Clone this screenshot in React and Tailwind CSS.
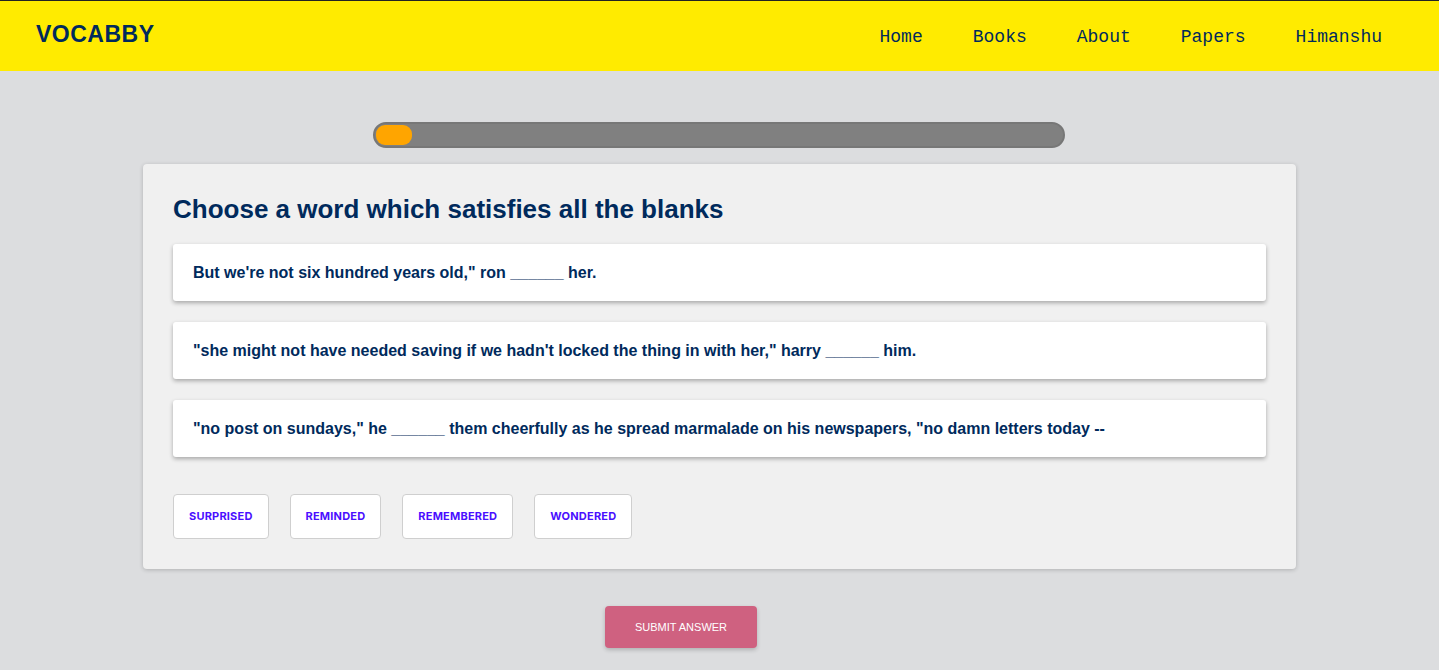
const sentences = [
  `But we're not six hundred years old," ron ______ her.`,
  `"she might not have needed saving if we hadn't locked the thing in with her," harry ______ him.`,
  `"no post on sundays," he ______ them cheerfully as he spread marmalade on his newspapers, "no damn letters today --`
];

const options = ["SURPRISED", "REMINDED", "REMEMBERED", "WONDERED"];

export default function App() {
  return (
    <div className="min-h-[670px] bg-[#dcdddf] font-['Liberation_Sans',Arial,sans-serif]">
      <header className="h-[71px] bg-[#ffeb00] border-t border-[#222] flex items-center justify-between pl-[36px] pr-[57px]">
        <div className="text-[23px] font-bold text-[#002a5c] tracking-[0.5px] -mt-[4px]">VOCABBY</div>
        <nav className="flex items-center gap-[50px] font-['Liberation_Mono','Courier_New',monospace] text-[18px] text-[#002a5c] mt-[3px]">
          <a>Home</a>
          <a>Books</a>
          <a>About</a>
          <a>Papers</a>
          <a>Himanshu</a>
        </nav>
      </header>

      <div className="flex justify-center pt-[51px] pr-[1px]">
        <div className="w-[692px] h-[26px] rounded-full bg-[#808080] border-[2px] border-[#777] p-[1px]">
          <div className="w-[36px] h-full rounded-[9px] bg-[#ffa500]" />
        </div>
      </div>

      <div className="mx-[143px] mt-[16px] bg-[#f0f0f0] rounded-[4px] shadow-[0_1px_4px_rgba(0,0,0,0.2)] px-[30px] pt-[30px] pb-[30px]">
        <h1 className="text-[26px] font-bold text-[#002a5c] leading-[30px]">
          Choose a word which satisfies all the blanks
        </h1>
        <div className="mt-[20px] flex flex-col gap-[21px]">
          {sentences.map((s, i) => (
            <div
              key={i}
              className="h-[57px] bg-white rounded-[3px] shadow-[0_2px_4px_rgba(0,0,0,0.3)] flex items-center px-[20px] text-[16px] font-bold text-[#002a5c]"
            >
              {s}
            </div>
          ))}
        </div>
        <div className="mt-[37px] flex gap-[21px]">
          {options.map((o) => (
            <button
              key={o}
              className="h-[45px] px-[15px] bg-white border border-[#cfcfcf] rounded-[4px] text-[11px] font-bold tracking-[0.2px] text-[#4a0fff] font-['Inter',sans-serif]"
            >
              {o}
            </button>
          ))}
        </div>
      </div>

      <div className="flex justify-center pt-[37px]">
        <button className="w-[152px] h-[42px] rounded-[4px] bg-[#cf6180] text-white text-[11px] shadow-[0_2px_4px_rgba(0,0,0,0.2)] -ml-[77px]">
          SUBMIT ANSWER
        </button>
      </div>
    </div>
  );
}
